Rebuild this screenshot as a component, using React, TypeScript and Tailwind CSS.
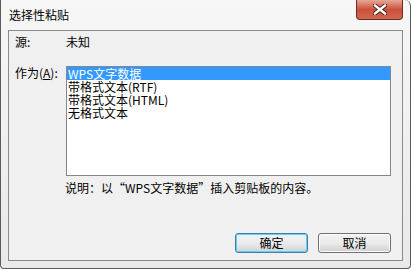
export default function App() {
  const items = ["WPS文字数据", "带格式文本(RTF)", "带格式文本(HTML)", "无格式文本"];
  const font = { fontFamily: '"Noto Sans CJK SC", "Liberation Sans", sans-serif' };

  return (
    <div
      className="w-[411px] h-[269px] flex flex-col bg-linear-to-b from-[#f7f7f8] to-[#e8e9ea] border-l border-r border-b border-[#5b5b5b] rounded-tr-[6px] rounded-b-[4px] px-[7px] pb-[7px] text-[12px] text-black"
      style={font}
    >
      {/* Title bar */}
      <div className="h-[30px] flex items-start justify-between shrink-0">
        <div className="pt-[7px] pl-[1px] leading-[16px] text-black">选择性粘贴</div>
        <div className="w-[47px] h-[20px] rounded-b-[4px] border border-t-0 border-[#6e2d22] bg-linear-to-b from-[#e7a796] via-[#c9503a] to-[#d4664f] flex items-center justify-center">
          <svg width="14" height="11" viewBox="0 0 14 11">
            <path d="M2 1.5 L12 9.5 M12 1.5 L2 9.5" stroke="#3a1a14" strokeWidth="4.2" strokeLinecap="square" />
            <path d="M2 1.5 L12 9.5 M12 1.5 L2 9.5" stroke="#ffffff" strokeWidth="2.4" strokeLinecap="square" />
          </svg>
        </div>
      </div>

      {/* Client area */}
      <div className="flex-1 flex flex-col border border-[#8b8b8b] bg-[#f0f0f0] pl-[6px] pr-[11px]">
        <div className="mt-[3px] flex leading-[16px]">
          <span className="w-[51px]">源:</span>
          <span>未知</span>
        </div>

        <div className="mt-[16px] flex items-start">
          <span className="w-[51px] leading-[14px]">
            作为(<span className="underline">A</span>):
          </span>
          <div className="w-[325px] h-[110px] border border-[#828790] bg-white">
            {items.map((item, i) => (
              <div
                key={item}
                className={`h-[13px] leading-[13px] pl-[1px] whitespace-nowrap ${
                  i === 0 ? "bg-[#3399ff] text-white" : "text-black"
                }`}
              >
                {item}
              </div>
            ))}
          </div>
        </div>

        <div className="mt-[4px] ml-[50px] leading-[16px] whitespace-nowrap">
          说明：以“WPS文字数据”插入剪贴板的内容。
        </div>

        <div className="mt-auto mb-[7px] flex justify-end gap-[10px]">
          <button className="w-[73px] h-[20px] rounded-[3px] border border-[#3c7fb1] bg-linear-to-b from-[#f2f2f2] via-[#ebebeb] to-[#d2d2d2] shadow-[inset_0_0_0_1px_#5fd0f3] leading-[18px] text-black">
            确定
          </button>
          <button className="w-[73px] h-[20px] rounded-[3px] border border-[#707070] bg-linear-to-b from-[#f2f2f2] via-[#ebebeb] to-[#cfcfcf] shadow-[inset_0_0_0_1px_#fcfcfc] leading-[18px] text-black">
            取消
          </button>
        </div>
      </div>
    </div>
  );
}
